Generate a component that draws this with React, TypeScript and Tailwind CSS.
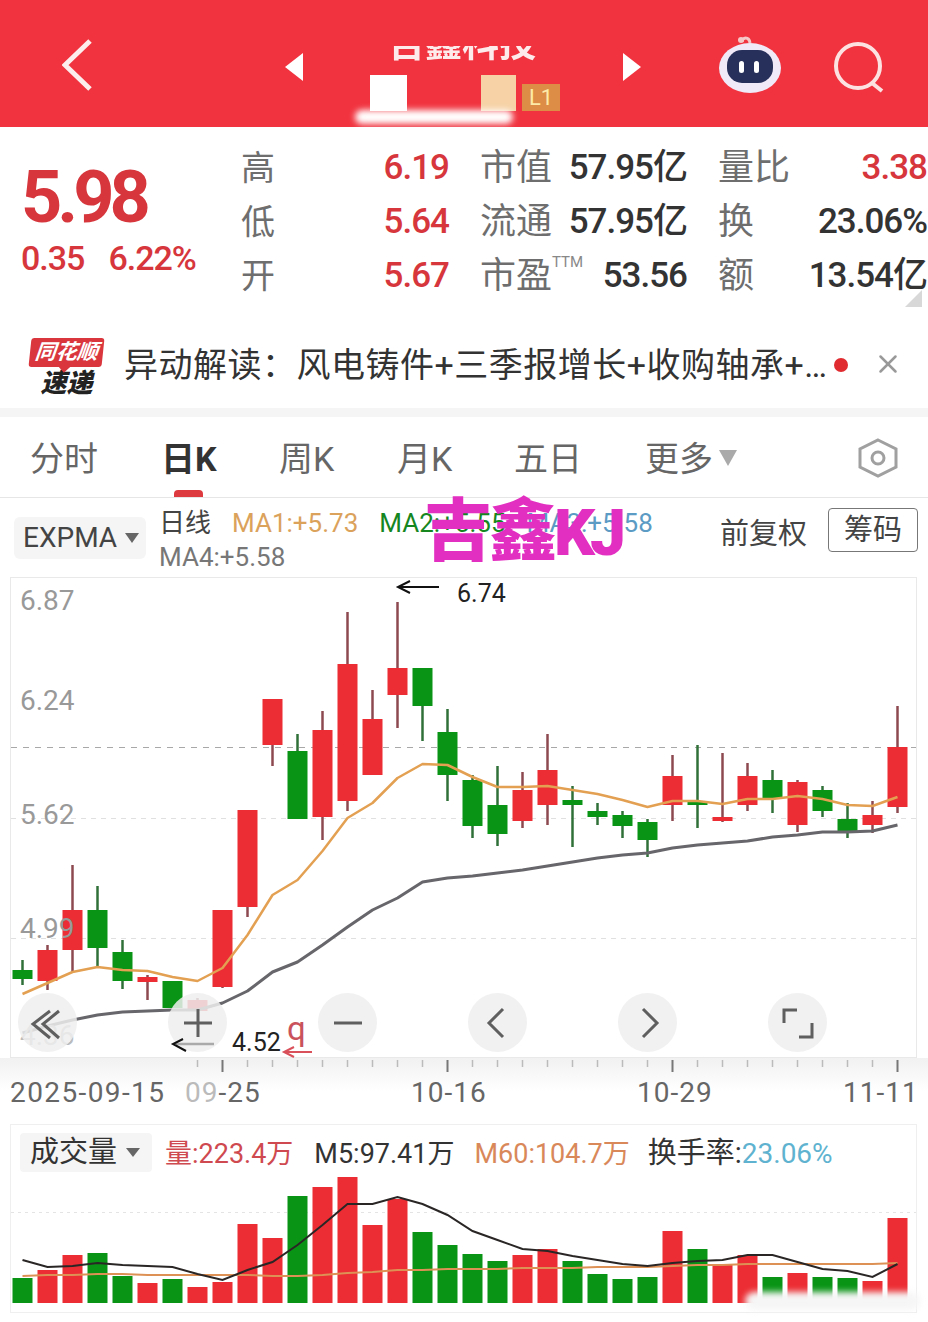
import { X } from 'lucide-react'

type Candle = [number, number, number, number, 'r' | 'g']

// wick top, wick bottom, body top, body bottom, colour (page y coordinates)
const candles: Candle[] = [
  [960, 985, 970, 979, 'g'],
  [945, 990, 950, 981, 'r'],
  [865, 972, 910, 950, 'r'],
  [886, 967, 910, 948, 'g'],
  [940, 989, 952, 981, 'g'],
  [975, 1000, 977, 982, 'r'],
  [981, 1008, 981, 1008, 'g'],
  [998, 1011, 1000, 1011, 'r'],
  [910, 988, 910, 987, 'r'],
  [810, 917, 810, 907, 'r'],
  [699, 766, 699, 745, 'r'],
  [734, 819, 751, 819, 'g'],
  [711, 840, 730, 817, 'r'],
  [612, 811, 664, 801, 'r'],
  [690, 775, 719, 775, 'r'],
  [602, 728, 668, 695, 'r'],
  [668, 741, 668, 706, 'g'],
  [709, 801, 732, 775, 'g'],
  [775, 838, 780, 826, 'g'],
  [766, 846, 805, 834, 'g'],
  [772, 828, 790, 821, 'r'],
  [734, 825, 770, 805, 'r'],
  [786, 847, 800, 805, 'g'],
  [803, 825, 811, 817, 'g'],
  [811, 838, 815, 826, 'g'],
  [819, 857, 822, 840, 'g'],
  [755, 821, 776, 805, 'r'],
  [745, 828, 801, 805, 'g'],
  [753, 822, 817, 821, 'r'],
  [763, 811, 776, 805, 'r'],
  [770, 813, 780, 798, 'g'],
  [780, 832, 782, 825, 'r'],
  [786, 817, 790, 811, 'g'],
  [803, 838, 819, 833, 'g'],
  [801, 833, 815, 825, 'r'],
  [706, 813, 747, 807, 'r'],
]

const maOrange = [994, 983, 972, 967, 970, 971, 977, 981, 968, 935, 895, 880, 851, 818, 803, 778, 764, 765, 777, 787, 787, 786, 790, 794, 800, 807, 801, 801, 804, 799, 799, 796, 799, 805, 806, 797]
const maGray = [1033, 1026, 1020, 1015, 1012, 1011, 1010, 1010, 1003, 991, 972, 962, 945, 927, 910, 898, 882, 878, 876, 873, 870, 866, 862, 858, 855, 853, 848, 845, 843, 841, 837, 835, 832, 832, 831, 825]

const volTops = [1278, 1270, 1255, 1253, 1276, 1283, 1279, 1287, 1282, 1224, 1238, 1196, 1187, 1177, 1225, 1199, 1232, 1245, 1254, 1261, 1255, 1249, 1261, 1274, 1279, 1277, 1231, 1249, 1265, 1255, 1277, 1273, 1277, 1278, 1281, 1218]
const volM5 = [1260, 1267, 1266, 1263, 1265, 1266, 1267, 1274, 1280, 1270, 1262, 1245, 1225, 1204, 1204, 1197, 1204, 1215, 1231, 1240, 1249, 1251, 1256, 1260, 1264, 1266, 1263, 1261, 1260, 1255, 1255, 1262, 1269, 1271, 1277, 1264]
const volM60 = [1276, 1275, 1275, 1274, 1274, 1275, 1275, 1275, 1275, 1275, 1276, 1276, 1275, 1273, 1272, 1270, 1270, 1269, 1269, 1269, 1268, 1268, 1268, 1267, 1267, 1267, 1266, 1265, 1265, 1264, 1264, 1264, 1264, 1264, 1264, 1263]

const cx = (i: number) => 22.5 + i * 25
const toPoints = (ys: number[]) => ys.map((y, i) => `${cx(i)},${y}`).join(' ')

const stats = [
  ['高', '6.19', '市值', '57.95亿', '量比', '3.38'],
  ['低', '5.64', '流通', '57.95亿', '换', '23.06%'],
  ['开', '5.67', '市盈', '53.56', '额', '13.54亿'],
]

const axisLabels = ['10-16', '10-29']

function TopBar() {
  return (
    <div className="relative flex h-[127px] items-center bg-[#f1333f] pl-[62px]">
      <svg className="mt-[2px]" width="32" height="54" viewBox="0 0 32 54">
        <path d="M28 3 L3 27 L28 51" fill="none" stroke="#fdeeee" strokeWidth="5" />
      </svg>
      <svg className="ml-[190px] mt-[6px]" width="20" height="30" viewBox="0 0 20 30">
        <path d="M19 1 L1 15 L19 29 Z" fill="#fff" />
      </svg>
      <div className="ml-[67px] flex h-[127px] w-[251px] flex-col items-start">
        <div className="mt-[46px] ml-[17px] h-[17px] w-[156px] overflow-hidden opacity-90 blur-[0.4px]">
          <div className="-mt-[20px] whitespace-nowrap text-[37px] leading-[37px] font-bold text-white">吉鑫科技</div>
        </div>
        <div className="mt-[12px] ml-[-1px] flex h-[36px] items-end">
          <div className="h-[36px] w-[37px] bg-white" />
          <div className="w-[74px]" />
          <div className="h-[36px] w-[35px] bg-[#f6d2a6]" />
          <div className="ml-[6px] flex h-[27px] w-[38px] items-center justify-center bg-[#dd8d45] text-[22px] text-[#fdeaa8]">L1</div>
        </div>
      </div>
      <svg className="mt-[6px]" width="20" height="30" viewBox="0 0 20 30">
        <path d="M1 1 L19 15 L1 29 Z" fill="#fff" />
      </svg>
      <svg className="ml-[76px] mt-[3px]" width="64" height="60" viewBox="0 0 64 60">
        <path d="M24 7 C24 2 31 1 32 8" fill="none" stroke="#f6c9c9" strokeWidth="3" />
        <circle cx="23" cy="5" r="3" fill="#f6c9c9" />
        <ellipse cx="32" cy="33" rx="31" ry="25" fill="#f0e9f8" />
        <rect x="9" y="15" width="46" height="33" rx="15" fill="#27305a" />
        <rect x="21" y="26" width="5" height="12" rx="2.5" fill="#fff" />
        <rect x="36" y="26" width="5" height="12" rx="2.5" fill="#fff" />
      </svg>
      <svg className="ml-[51px] mt-[8px]" width="54" height="54" viewBox="0 0 54 54">
        <circle cx="25" cy="25" r="22" fill="none" stroke="#fde2e2" strokeWidth="4" />
        <path d="M39 42 L49 50" stroke="#fde2e2" strokeWidth="4" />
      </svg>
      <div className="absolute left-[355px] top-[110px] h-[14px] w-[158px] rounded-full bg-white blur-[3px]" />
    </div>
  )
}

function Quote() {
  return (
    <div className="relative flex h-[200px] bg-white pt-[14px]">
      <div className="w-[241px] shrink-0 pl-[21px] text-[#d6363c]">
        <div className="mt-[21px] text-[72px] leading-[72px] font-bold tracking-[-5px]">5.98</div>
        <div className="mt-[4px] flex gap-[24px] text-[34px] leading-[40px] font-medium tracking-[-1px]">
          <span>0.35</span>
          <span>6.22%</span>
        </div>
      </div>
      <div className="flex flex-1 flex-col">
        {stats.map((row) => (
          <div key={row[0]} className="grid h-[54px] grid-cols-[208px_207px_209px] items-center gap-x-[31px] text-[35px] font-medium tracking-[-1px]">
            <div className="flex items-center justify-between">
              <span className="text-[34px] font-normal tracking-normal text-[#6e6e6e]">{row[0]}</span>
              <span className="text-[#d6363c]">{row[1]}</span>
            </div>
            <div className="flex items-center justify-between">
              <span className="flex items-start text-[36px] font-normal tracking-normal text-[#6e6e6e]">
                {row[2]}
                {row[2] === '市盈' ? <span className="mt-[6px] text-[15px] leading-[15px] text-[#888]">TTM</span> : null}
              </span>
              <span className="text-[#333]">{row[3]}</span>
            </div>
            <div className="flex items-center justify-between">
              <span className="text-[36px] font-normal tracking-normal text-[#6e6e6e]">{row[4]}</span>
              <span className={row[4] === '量比' ? 'text-[#d6363c]' : 'text-[#333]'}>{row[5]}</span>
            </div>
          </div>
        ))}
      </div>
      <div className="absolute bottom-[20px] right-[6px] h-0 w-0 border-b-[17px] border-l-[17px] border-b-[#d8d8d8] border-l-transparent" />
    </div>
  )
}

function Notice() {
  return (
    <div className="flex h-[81px] items-center bg-white pl-[30px]">
      <div className="flex w-[73px] shrink-0 flex-col items-center">
        <div className="relative flex h-[29px] w-[73px] -skew-x-6 items-center justify-center rounded-[3px] bg-[#d9363e] text-[21px] font-bold italic text-white">
          同花顺
          <div className="absolute bottom-[-4px] left-[32px] h-[8px] w-[8px] rotate-45 bg-[#d9363e]" />
        </div>
        <div className="mt-[3px] text-[26px] leading-[27px] font-black italic text-[#222]">速递</div>
      </div>
      <div className="ml-[21px] w-[710px] -translate-y-[2px] whitespace-nowrap text-[34px] tracking-[0.5px] text-[#333]">异动解读：风电铸件+三季报增长+收购轴承+…</div>
      <div className="h-[14px] w-[14px] -translate-y-[3px] rounded-full bg-[#e02b30]" />
      <X className="ml-[25px] h-[30px] w-[30px] -translate-y-[4px] text-[#999]" strokeWidth={2} />
    </div>
  )
}

function Tabs() {
  const tabs = [
    { label: '分时', width: 131 },
    { label: '日K', width: 118, active: true },
    { label: '周K', width: 118 },
    { label: '月K', width: 117 },
    { label: '五日', width: 131 },
  ]
  return (
    <div className="flex h-[81px] items-center border-b border-[#e6e6e6] bg-white pl-[30px] pt-[5px] text-[34px] text-[#666]">
      {tabs.map((tab) => (
        <div key={tab.label} className="relative shrink-0" style={{ width: tab.width }}>
          <span className={tab.active ? 'font-bold text-[#333]' : ''}>{tab.label}</span>
          {tab.active ? <div className="absolute bottom-[-12px] left-[13px] h-[7px] w-[29px] rounded-t-[4px] bg-[#dd3a3f]" /> : null}
        </div>
      ))}
      <span>更多</span>
      <span className="ml-[6px] mb-[4px] h-0 w-0 border-x-[9px] border-t-[16px] border-x-transparent border-t-[#aaa]" />
      <svg className="ml-[121px] mb-[4px]" width="40" height="40" viewBox="0 0 40 40">
        <path d="M20 2 L38 11 L38 29 L20 38 L2 29 L2 11 Z" fill="none" stroke="#a0a0a0" strokeWidth="3" />
        <circle cx="20" cy="20" r="6" fill="none" stroke="#a0a0a0" strokeWidth="3" />
      </svg>
    </div>
  )
}

function IndicatorRow() {
  return (
    <div className="relative flex h-[79px] items-start bg-white pl-[14px] pt-[8px] text-[26px] leading-[34px]">
      <div className="mt-[11px] flex h-[42px] w-[132px] shrink-0 items-center rounded-[6px] bg-[#f5f5f5] pl-[9px] text-[28px] text-[#444]">
        EXPMA
        <span className="ml-[8px] h-0 w-0 border-x-[7px] border-t-[10px] border-x-transparent border-t-[#666]" />
      </div>
      <div className="ml-[13px] w-[561px] shrink-0">
        <div className="flex gap-[21px] whitespace-nowrap">
          <span className="text-[#444]">日线</span>
          <span className="text-[#dba25c]">MA1:+5.73</span>
          <span className="text-[#16861f]">MA2:+5.55</span>
          <span className="text-[#5b9bc4]">MA3:+5.58</span>
        </div>
        <div className="text-[#777]">MA4:+5.58</div>
      </div>
      <span className="mt-[7px] text-[29px] leading-[42px] text-[#444]">前复权</span>
      <div className="ml-[21px] mt-[2px] flex h-[44px] w-[90px] items-center justify-center rounded-[4px] border border-[#777] text-[29px] text-[#444]">筹码</div>
      <div className="absolute left-[424px] top-[-6px] whitespace-nowrap text-[68px] leading-[80px] font-black tracking-[-3px] text-[#e32fc1]">
        吉鑫<span className="text-[64px] tracking-[-5px]">KJ</span>
      </div>
    </div>
  )
}

function ChartButton({ d }: { d: string }) {
  return (
    <div className="flex h-[59px] w-[59px] items-center justify-center rounded-full bg-[#eeeeee]/85">
      <svg width="40" height="40" viewBox="0 0 40 40" fill="none" stroke="#5f5f5f" strokeWidth="3">
        <path d={d} />
      </svg>
    </div>
  )
}

function PriceChart() {
  const icons = [
    'M22 8 L5 21 L22 35 M31 8 L15 21 L31 35',
    'M6 20 H34 M20 6 V34',
    'M6 20 H34',
    'M25 6 L11 20 L25 34',
    'M15 6 L29 20 L15 34',
    'M6 20 V7 H19 M34 20 V34 H21',
  ]
  return (
    <div className="relative h-[481px]">
      <svg width="928" height="481" viewBox="0 577 928 481" className="block">
        <rect x="10.5" y="577.5" width="906" height="480" fill="#fff" stroke="#e9e9e9" />
        <line x1="11" x2="916" y1="747.5" y2="747.5" stroke="#a8a8a8" strokeDasharray="6 6" />
        <line x1="11" x2="916" y1="818.5" y2="818.5" stroke="#e0e0e0" strokeDasharray="5 5" />
        <line x1="11" x2="916" y1="938.5" y2="938.5" stroke="#e0e0e0" strokeDasharray="5 5" />
        {candles.map(([wt, wb, bt, bb, c], i) => (
          <g key={i}>
            <line x1={cx(i)} x2={cx(i)} y1={wt} y2={wb} stroke={c === 'r' ? '#8c4a50' : '#2f7038'} strokeWidth="2.5" />
            <rect x={cx(i) - 10} y={bt} width="20" height={bb - bt} fill={c === 'r' ? '#ec2d33' : '#0a9416'} />
          </g>
        ))}
        <polyline points={toPoints(maOrange)} fill="none" stroke="#e3a052" strokeWidth="2.5" strokeLinejoin="round" />
        <polyline points={toPoints(maGray)} fill="none" stroke="#66666b" strokeWidth="3" strokeLinejoin="round" />
        <g className="fill-[#999] text-[28px]">
          <text x="20" y="610">6.87</text>
          <text x="20" y="710">6.24</text>
          <text x="20" y="824">5.62</text>
          <text x="20" y="938">4.99</text>
          <text x="20" y="1045" className="fill-[#bbb]">4.36</text>
        </g>
      </svg>

      <div className="absolute left-[18px] top-[416px] flex gap-[91px]">
        {icons.map((d) => (
          <ChartButton key={d} d={d} />
        ))}
      </div>

      {/* hand drawn notes on the chart */}
      <svg className="absolute left-0 top-0" width="928" height="481" viewBox="0 577 928 481" fill="none">
        <path d="M439 587 H399 M410 581 L398 587 L410 593" stroke="#111" strokeWidth="2" />
        <path d="M214 1044 H176" stroke="#aaa" strokeWidth="2.5" />
        <path d="M183 1039 L173 1044 L186 1051" stroke="#111" strokeWidth="2" />
        <path d="M312 1052 H285 M294 1047 L284 1052 L294 1057" stroke="#d9505a" strokeWidth="2" />
        <g className="fill-[#222] text-[25px]">
          <text x="457" y="602">6.74</text>
          <text x="232" y="1051">4.52</text>
        </g>
        <text x="287" y="1040" className="fill-[#c9525c] text-[33px]">q</text>
      </svg>
    </div>
  )
}

function AxisRow() {
  const ticks = Array.from({ length: 29 }, (_, i) => 197.5 + i * 25)
  const majors = [222.5, 447.5, 672.5, 897.5]
  return (
    <div className="h-[66px] bg-gradient-to-b from-[#f1f1f1] via-white to-white">
      <svg className="block" width="928" height="17">
        {ticks.map((x) => (
          <line key={x} x1={x} x2={x} y1="2" y2={majors.includes(x) ? 14 : 9} stroke={majors.includes(x) ? '#777' : '#bbb'} strokeWidth={majors.includes(x) ? 2 : 1.5} />
        ))}
      </svg>
      <div className="flex pl-[10px] text-[28px] leading-[36px] tracking-[1px] text-[#666]">
        <span className="w-[175px] tracking-[1.4px]">2025-09-15</span>
        <span className="w-[226px]"><span className="text-[#bbb]">09</span>-25</span>
        {axisLabels.map((label) => (
          <span key={label} className="w-[226px]">{label}</span>
        ))}
        <span className="-ml-[20px]">11-11</span>
      </div>
    </div>
  )
}

function VolumePanel() {
  return (
    <div className="relative h-[198px] bg-white">
      <svg width="928" height="198" viewBox="0 1124 928 198" className="block">
        <rect x="10.5" y="1124.5" width="906" height="188" fill="#fff" stroke="#efefef" />
        <line x1="11" x2="916" y1="1212.5" y2="1212.5" stroke="#e4e4e4" strokeDasharray="3 4" />
        {volTops.map((top, i) => (
          <rect key={i} x={cx(i) - 10} y={top} width="20" height={1303 - top} fill={candles[i][4] === 'r' ? '#ec2d33' : '#0a9416'} />
        ))}
        <polyline points={toPoints(volM60)} fill="none" stroke="#dd9155" strokeWidth="2" />
        <polyline points={toPoints(volM5)} fill="none" stroke="#2a2626" strokeWidth="2" />
      </svg>
      <div className="absolute left-[20px] top-[9px] flex h-[39px] items-center whitespace-nowrap text-[27px]">
        <div className="flex h-[39px] w-[132px] items-center rounded-[4px] bg-[#f5f5f5] pl-[10px] text-[29px] text-[#333]">
          成交量
          <span className="ml-[9px] h-0 w-0 border-x-[7px] border-t-[9px] border-x-transparent border-t-[#666]" />
        </div>
        <span className="ml-[13px] mt-[3px] text-[#cf4a50]">量:223.4万</span>
        <span className="ml-[21px] mt-[3px] text-[#333]">M5:97.41万</span>
        <span className="ml-[20px] mt-[3px] text-[#d9885a]">M60:104.7万</span>
        <span className="ml-[18px] mt-[3px] text-[29px] text-[#333]">换手率:<span className="text-[28px] text-[#5fb3d0]">23.06%</span></span>
      </div>
      <div className="absolute left-[745px] top-[168px] h-[18px] w-[175px] rounded-full bg-[#f6f6f6] blur-[3px]" />
    </div>
  )
}

export default function App() {
  return (
    <div className="h-[1322px] w-[928px] overflow-hidden bg-white [font-family:Roboto,'Noto_Sans_CJK_SC',sans-serif]">
      <TopBar />
      <Quote />
      <Notice />
      <div className="h-[9px] bg-[#f5f5f5]" />
      <Tabs />
      <IndicatorRow />
      <PriceChart />
      <AxisRow />
      <VolumePanel />
    </div>
  )
}
